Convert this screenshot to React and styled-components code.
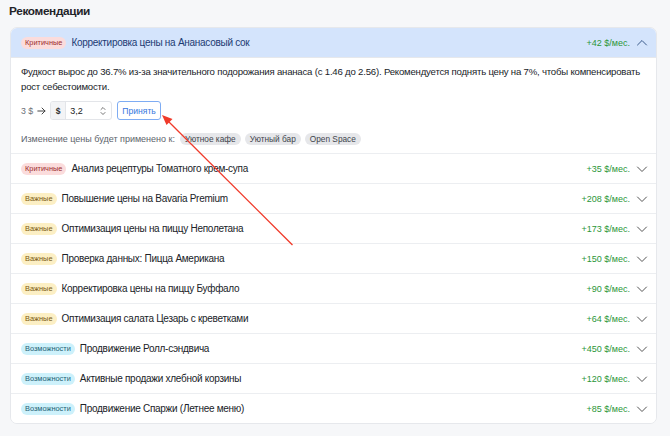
import React from "react";
import styled, { createGlobalStyle } from "styled-components";

const Global = createGlobalStyle`
  html, body { margin: 0; padding: 0; background: #f6f7f9; }
  body { font-family: "Liberation Sans", Arial, sans-serif; -webkit-font-smoothing: antialiased; }
  * { box-sizing: border-box; }
`;

const Page = styled.div`
  position: relative;
  width: 670px;
  height: 436px;
  padding: 3px 13px 0 10px;
  overflow: hidden;
`;

const Title = styled.h2`
  margin: 0 0 7px -1px;
  font-size: 11.8px;
  letter-spacing: -0.35px;
  font-weight: 700;
  color: #1f2328;
  line-height: 17px;
`;

const Card = styled.div`
  background: #fff;
  border: 1px solid #e6e8ec;
  border-radius: 7px;
  overflow: hidden;
`;

const Row = styled.div`
  display: flex;
  align-items: center;
  height: ${p => (p.$open ? 29 : 30)}px;
  padding: 0 8px 0 10px;
  background: ${p => (p.$open ? "#d4e4fc" : "#fff")};
  border-top: ${p => (p.$first ? "none" : "1px solid #eceef1")};
`;

const badgeColors = {
  crit: { bg: "#fbdcdc", fg: "#9b2c2c" },
  imp: { bg: "#fcefc4", fg: "#7a5a10" },
  opp: { bg: "#cdf1fb", fg: "#1d5f73" },
};

const Badge = styled.span`
  display: inline-flex;
  align-items: center;
  height: 12px;
  padding: 0 4px;
  border-radius: 6px;
  font-size: 7.4px;
  background: ${p => badgeColors[p.$kind].bg};
  color: ${p => badgeColors[p.$kind].fg};
  margin-right: 5px;
  white-space: nowrap;
`;

const RowTitle = styled.span`
  flex: 1;
  font-size: 10px;
  letter-spacing: -0.28px;
  color: ${p => (p.$open ? "#1c3b73" : "#202328")};
  white-space: nowrap;
`;

const Amount = styled.span`
  font-size: 9px;
  color: #2b9638;
  margin-right: 6px;
`;

const Chevron = styled.svg`
  width: 12px;
  height: 12px;
  color: ${p => (p.$open ? "#3b5a8a" : "#555")};
`;

const Body = styled.div`
  padding: 7px 6px 8px 10px;
  border-top: 1px solid #e6e8ec;
`;

const Para = styled.p`
  margin: 0;
  font-size: 9.6px;
  letter-spacing: -0.2px;
  line-height: 14.5px;
  color: #202328;
`;

const Controls = styled.div`
  display: flex;
  align-items: center;
  margin-top: 7px;
  height: 19px;
`;

const OldPrice = styled.span`
  font-size: 8.8px;
  color: #6b7078;
  margin-right: 4px;
`;

const ArrowIcon = styled.svg`
  width: 9px;
  height: 8px;
  margin-right: 4px;
`;

const InputGroup = styled.div`
  display: flex;
  height: 19px;
  width: 62px;
  border: 1px solid #e3e5e9;
  border-radius: 3px;
  overflow: hidden;
  margin-right: 5px;
`;

const Prefix = styled.span`
  display: flex;
  align-items: center;
  justify-content: center;
  width: 15px;
  background: #f3f4f6;
  border-right: 1px solid #e3e5e9;
  font-size: 8.6px;
  font-weight: 700;
  color: #333;
`;

const Value = styled.span`
  flex: 1;
  display: flex;
  align-items: center;
  justify-content: space-between;
  padding: 0 5px 0 4px;
  font-size: 9px;
  color: #222;
`;

const Spin = styled.svg`
  width: 6px;
  height: 10px;
`;

const AcceptBtn = styled.button`
  height: 19px;
  padding: 0 4px;
  border: 1px solid #7eacf3;
  border-radius: 3px;
  background: #fff;
  color: #3677e0;
  font-family: inherit;
  font-size: 8.6px;
`;

const Applies = styled.div`
  display: flex;
  align-items: center;
  gap: 4px;
  margin-top: 13px;
  font-size: 9px;
  color: #5d636b;
`;

const Label = styled.span`
  margin-right: 1px;
`;

const Chip = styled.span`
  display: inline-flex;
  align-items: center;
  height: 12px;
  padding: 0 5px;
  border-radius: 6px;
  background: #e6e7ea;
  color: #41454c;
  font-size: 8.3px;
`;

const Overlay = styled.svg`
  position: absolute;
  left: 0;
  top: 0;
  pointer-events: none;
`;

const ChevronDown = ({ open }) => (
  <Chevron $open={open} viewBox="0 0 12 12" fill="none" stroke="currentColor" strokeWidth="1" strokeLinecap="round" strokeLinejoin="round">
    {open ? <path d="M1.5 8 L6 3.5 L10.5 8" /> : <path d="M1.5 4 L6 8.5 L10.5 4" />}
  </Chevron>
);

const items = [
  { kind: "crit", label: "Критичные", title: "Анализ рецептуры Томатного крем-супа", amount: "+35" },
  { kind: "imp", label: "Важные", title: "Повышение цены на Bavaria Premium", amount: "+208" },
  { kind: "imp", label: "Важные", title: "Оптимизация цены на пиццу Неполетана", amount: "+173" },
  { kind: "imp", label: "Важные", title: "Проверка данных: Пицца Американа", amount: "+150" },
  { kind: "imp", label: "Важные", title: "Корректировка цены на пиццу Буффало", amount: "+90" },
  { kind: "imp", label: "Важные", title: "Оптимизация салата Цезарь с креветками", amount: "+64" },
  { kind: "opp", label: "Возможности", title: "Продвижение Ролл-сэндвича", amount: "+450" },
  { kind: "opp", label: "Возможности", title: "Активные продажи хлебной корзины", amount: "+120" },
  { kind: "opp", label: "Возможности", title: "Продвижение Спаржи (Летнее меню)", amount: "+85" },
];

export default function App() {
  return (
    <>
      <Global />
      <Page>
        <Title>Рекомендации</Title>
        <Card>
          <Row $open $first>
            <Badge $kind="crit">Критичные</Badge>
            <RowTitle $open>Корректировка цены на Ананасовый сок</RowTitle>
            <Amount>+42 $/мес.</Amount>
            <ChevronDown open />
          </Row>
          <Body>
            <Para>
              Фудкост вырос до 36.7% из-за значительного подорожания ананаса (с 1.46 до 2.56). Рекомендуется поднять цену на 7%, чтобы компенсировать рост себестоимости.
            </Para>
            <Controls>
              <OldPrice>3 $</OldPrice>
              <ArrowIcon viewBox="0 0 9 8" fill="none" stroke="#444" strokeWidth="1" strokeLinecap="round" strokeLinejoin="round">
                <path d="M0.8 4 H8 M5 1 L8 4 L5 7" />
              </ArrowIcon>
              <InputGroup>
                <Prefix>$</Prefix>
                <Value>
                  3,2
                  <Spin viewBox="0 0 6 10" fill="none" stroke="#666" strokeWidth="0.9" strokeLinecap="round" strokeLinejoin="round">
                    <path d="M1 3.5 L3 1.5 L5 3.5" />
                    <path d="M1 6.5 L3 8.5 L5 6.5" />
                  </Spin>
                </Value>
              </InputGroup>
              <AcceptBtn>Принять</AcceptBtn>
            </Controls>
            <Applies>
              <Label>Изменение цены будет применено к:</Label>
              <Chip>Уютное кафе</Chip>
              <Chip>Уютный бар</Chip>
              <Chip>Open Space</Chip>
            </Applies>
          </Body>
          {items.map((it, i) => (
            <Row key={i}>
              <Badge $kind={it.kind}>{it.label}</Badge>
              <RowTitle>{it.title}</RowTitle>
              <Amount>{it.amount} $/мес.</Amount>
              <ChevronDown />
            </Row>
          ))}
        </Card>
        <Overlay width="670" height="436" viewBox="0 0 670 436">
          <line x1="292.5" y1="245" x2="168" y2="121" stroke="#f03a2a" strokeWidth="1.3" />
          <path d="M162 115 L172.5 119 L166.5 125 Z" fill="#f03a2a" />
        </Overlay>
      </Page>
    </>
  );
}
